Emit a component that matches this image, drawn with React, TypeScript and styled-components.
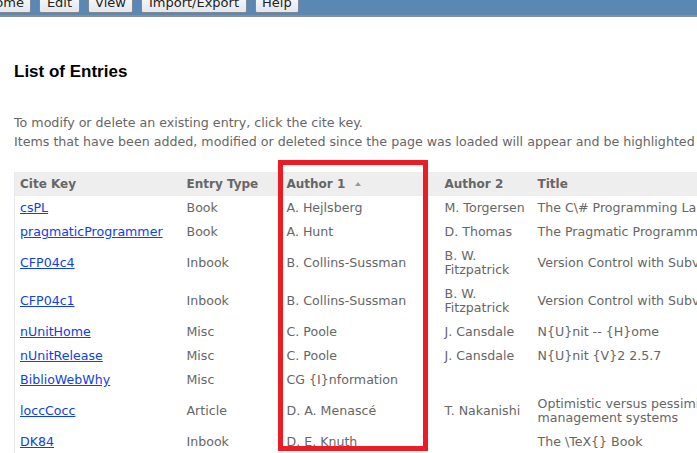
import React from "react";
import styled, { createGlobalStyle } from "styled-components";

const Global = createGlobalStyle`
  html, body { margin: 0; padding: 0; background: #fff; overflow: hidden; }
  * { box-sizing: border-box; }
  body { font-family: "DejaVu Sans", Verdana, sans-serif; }
`;

const Page = styled.div`
  position: relative;
  width: 697px;
  height: 453px;
  overflow: hidden;
`;

const Toolbar = styled.div`
  height: 17px;
  background: #5b87b3;
  border-bottom: 2px solid #8a8f96;
  display: flex;
  align-items: flex-end;
  gap: 8px;
  overflow: hidden;
  padding-bottom: 2px;
`;

const MenuButton = styled.button<{ $offset?: number }>`
  font-family: "DejaVu Sans", Verdana, sans-serif;
  font-size: 13px;
  line-height: 15px;
  color: #222;
  height: 22px;
  padding: 1px 6.5px 0;
  margin: 0;
  margin-left: ${(p) => (p.$offset ? `${p.$offset}px` : "0")};
  flex: none;
  border: 1px solid #7d8894;
  border-radius: 2px;
  background: linear-gradient(#ffffff, #e2e7ec);
`;

const Content = styled.div`
  padding: 45px 0 0 14px;
`;

const Heading = styled.h1`
  margin: 0;
  font-family: "Liberation Sans", Arial, sans-serif;
  font-weight: bold;
  font-size: 17px;
  line-height: 20px;
  color: #000;
`;

const Intro = styled.p`
  margin: 31px 0 0;
  font-size: 12.65px;
  line-height: 19px;
  color: #666;
  white-space: nowrap;
`;

const Table = styled.table`
  margin-top: 21px;
  border-collapse: collapse;
  table-layout: fixed;
  width: 920px;
  font-size: 12.6px;
  line-height: 14px;
  color: #666;
  border-left: 1px solid #e6e9ee;
`;

const HeadCell = styled.th<{ $w: number }>`
  width: ${(p) => p.$w}px;
  background: #eeeeee;
  text-align: left;
  font-weight: bold;
  font-size: 12px;
  color: #666;
  padding: 5px 5px;
  height: 24px;
  white-space: nowrap;
`;

const Cell = styled.td`
  padding: 5px 5px;
  height: 24px;
  vertical-align: middle;
  white-space: pre;
`;

const CiteLink = styled.a`
  color: #1040e8;
  text-decoration: underline;
`;

const SortArrow = styled.span`
  display: inline-block;
  margin-left: 10px;
  vertical-align: middle;
  width: 0;
  height: 0;
  border-left: 3px solid transparent;
  border-right: 3px solid transparent;
  border-bottom: 4px solid #999;
  position: relative;
  top: -1px;
`;

const Highlight = styled.div`
  position: absolute;
  left: 278px;
  top: 160px;
  width: 150px;
  height: 291px;
  border: 5px solid #ed1c24;
  pointer-events: none;
`;

type Entry = { key: string; type: string; a1: string; a2: string; title: string };

const entries: Entry[] = [
  { key: "csPL", type: "Book", a1: "A. Hejlsberg", a2: "M. Torgersen", title: "The C\\# Programming Language" },
  { key: "pragmaticProgrammer", type: "Book", a1: "A. Hunt", a2: "D. Thomas", title: "The Pragmatic Programmer" },
  { key: "CFP04c4", type: "Inbook", a1: "B. Collins-Sussman", a2: "B. W.\nFitzpatrick", title: "Version Control with Subversion" },
  { key: "CFP04c1", type: "Inbook", a1: "B. Collins-Sussman", a2: "B. W.\nFitzpatrick", title: "Version Control with Subversion" },
  { key: "nUnitHome", type: "Misc", a1: "C. Poole", a2: "J. Cansdale", title: "N{U}nit -- {H}ome" },
  { key: "nUnitRelease", type: "Misc", a1: "C. Poole", a2: "J. Cansdale", title: "N{U}nit {V}2 2.5.7" },
  { key: "BiblioWebWhy", type: "Misc", a1: "CG {I}nformation", a2: "", title: "" },
  { key: "loccCocc", type: "Article", a1: "D. A. Menascé", a2: "T. Nakanishi", title: "Optimistic versus pessimistic concurrency control in\nmanagement systems" },
  { key: "DK84", type: "Inbook", a1: "D. E. Knuth", a2: "", title: "The \\TeX{} Book" },
];

const menus = ["Home", "Edit", "View", "Import/Export", "Help"];

export default function App() {
  return (
    <Page>
      <Global />
      <Toolbar>
        {menus.map((m, i) => (
          <MenuButton key={m} $offset={i === 0 ? -22 : 0}>
            {m}
          </MenuButton>
        ))}
      </Toolbar>
      <Content>
        <Heading>List of Entries</Heading>
        <Intro>
          To modify or delete an existing entry, click the cite key.
          <br />
          Items that have been added, modified or deleted since the page was loaded will appear and be highlighted in this list.
        </Intro>
        <Table>
          <thead>
            <tr>
              <HeadCell $w={167}>Cite Key</HeadCell>
              <HeadCell $w={100}>Entry Type</HeadCell>
              <HeadCell $w={158}>
                Author 1<SortArrow />
              </HeadCell>
              <HeadCell $w={93}>Author 2</HeadCell>
              <HeadCell $w={402}>Title</HeadCell>
            </tr>
          </thead>
          <tbody>
            {entries.map((e) => (
              <tr key={e.key}>
                <Cell>
                  <CiteLink href="#">{e.key}</CiteLink>
                </Cell>
                <Cell>{e.type}</Cell>
                <Cell>{e.a1}</Cell>
                <Cell>{e.a2}</Cell>
                <Cell>{e.title}</Cell>
              </tr>
            ))}
          </tbody>
        </Table>
      </Content>
      <Highlight />
    </Page>
  );
}
